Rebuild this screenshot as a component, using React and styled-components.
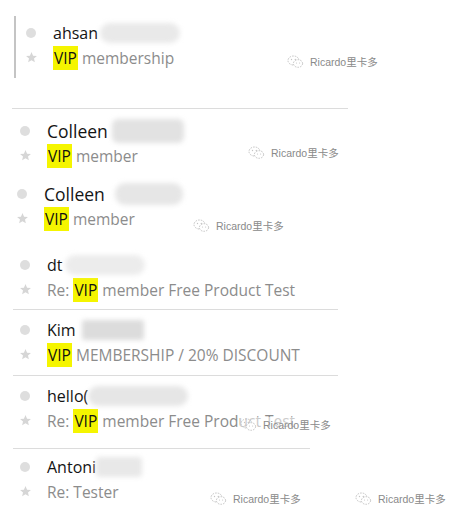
import React from "react";
import styled, { createGlobalStyle } from "styled-components";

// =================== Global ===================
const GlobalStyle = createGlobalStyle`
  html, body {
    margin: 0;
    padding: 0;
    background: #ffffff;
  }
  body {
    font-family: "Open Sans", "Noto Sans", "Liberation Sans", sans-serif;
  }
`;

// =================== Styled Components ===================
const Page = styled.div`
  position: relative;
  width: 467px;
  height: 521px;
  overflow: hidden;
  display: flex;
  flex-direction: column;
  align-items: flex-start;
`;

const Clip = styled.div`
  box-sizing: border-box;
  margin-top: ${(p) => p.$mt || 0}px;
  margin-left: ${(p) => p.$ml || 0}px;
  width: ${(p) => (p.$w ? `${p.$w}px` : "auto")};
  padding: ${(p) => p.$pt || 0}px 0 ${(p) => p.$pb || 0}px ${(p) => p.$pl || 0}px;
  border-left: ${(p) => (p.$bar ? "2px solid #c4c4c4" : "none")};
  border-top: ${(p) => (p.$lineTop ? "1px solid #dcdcdc" : "none")};
  border-bottom: ${(p) => (p.$lineBottom ? "1px solid #dcdcdc" : "none")};
  min-height: ${(p) => (p.$h ? `${p.$h}px` : "0")};
`;

const Row = styled.div`
  display: grid;
  grid-template-columns: 16px auto;
  column-gap: 14px;
  grid-auto-rows: 25px;
  align-items: center;
`;

const IconCell = styled.div`
  display: flex;
  align-items: center;
  justify-content: center;
`;

const Dot = styled.span`
  width: 10px;
  height: 10px;
  border-radius: 50%;
  background: #dedede;
`;

const Name = styled.div`
  font-size: ${(p) => p.$size || 16}px;
  color: #141414;
  white-space: nowrap;
  display: flex;
  align-items: center;
`;

const Blur = styled.span`
  display: inline-block;
  width: ${(p) => p.$w}px;
  height: ${(p) => p.$h || 20}px;
  margin-left: ${(p) => p.$ml || 0}px;
  background: ${(p) => p.$bg || "#e4e4e4"};
  border-radius: ${(p) => p.$r ?? 10}px;
  filter: blur(2.5px);
`;

const Subject = styled.div`
  font-size: 15.5px;
  color: #8c8c8c;
  white-space: nowrap;
`;

const Mark = styled.span`
  background: #f5f500;
  color: #111;
  padding: 1px 1px;
`;

const Watermark = styled.div`
  position: absolute;
  left: ${(p) => p.$x}px;
  top: ${(p) => p.$y}px;
  display: flex;
  align-items: center;
  gap: 6px;
  font-family: "Liberation Sans", "Noto Sans CJK SC", sans-serif;
  font-size: 10.5px;
  color: #8a8a8a;
  background: ${(p) => (p.$solid ? "rgba(255,255,255,0.55)" : "transparent")};
  white-space: nowrap;
`;

// =================== Icons ===================
const Star = () => (
  <svg width="13" height="13" viewBox="0 0 24 24">
    <path
      d="M12 2l2.9 6.6 7.1.6-5.4 4.7 1.6 7-6.2-3.7-6.2 3.7 1.6-7L2 9.2l7.1-.6z"
      fill="#d6d6d6"
    />
  </svg>
);

const WeChatIcon = () => (
  <svg width="17" height="14" viewBox="0 0 17 14">
    <ellipse cx="6.5" cy="5.5" rx="5.5" ry="4.5" fill="none" stroke="#c4c4c4" strokeWidth="1" strokeDasharray="1.6 1.1" />
    <ellipse cx="11" cy="8.5" rx="4.6" ry="3.8" fill="#fff" stroke="#c4c4c4" strokeWidth="1" strokeDasharray="1.6 1.1" />
    <circle cx="4.5" cy="4.5" r="0.7" fill="#c4c4c4" />
    <circle cx="8.3" cy="4.5" r="0.7" fill="#c4c4c4" />
    <circle cx="9.5" cy="8" r="0.6" fill="#c4c4c4" />
    <circle cx="12.6" cy="8" r="0.6" fill="#c4c4c4" />
  </svg>
);

// =================== Data ===================
const emails = [
  {
    name: "ahsan",
    blur: { w: 80, ml: 2, bg: "#e9e9e9" },
    subject: [null, "membership"],
    clip: { $mt: 16, $ml: 14, $pl: 7, $pt: 4, $h: 62, $bar: true },
  },
  {
    name: "Colleen",
    size: 17.5,
    blur: { w: 72, ml: 4, h: 24, bg: "#e2e2e2", r: 6 },
    subject: [null, "member"],
    clip: { $mt: 30, $ml: 12, $w: 336, $pl: 5, $pt: 9, $lineTop: true },
  },
  {
    name: "Colleen",
    size: 17.5,
    blur: { w: 68, ml: 10, h: 22, bg: "#e6e6e6" },
    subject: [null, "member"],
    clip: { $mt: 13, $ml: 14, $pl: 0, $pt: 0 },
  },
  {
    name: "dt",
    blur: { w: 80, ml: 2, bg: "#ececec" },
    subject: ["Re: ", "member Free Product Test"],
    clip: { $mt: 21, $ml: 13, $w: 325, $pl: 4, $pb: 7, $lineBottom: true },
  },
  {
    name: "Kim",
    blur: { w: 62, ml: 6, bg: "#dcdcdc", r: 2 },
    subject: [null, "MEMBERSHIP / 20% DISCOUNT"],
    clip: { $w: 325, $ml: 13, $pl: 4, $pt: 7, $pb: 8, $lineBottom: true },
  },
  {
    name: "hello(",
    blur: { w: 100, ml: 0, bg: "#e6e6e6" },
    subject: ["Re: ", "member Free Product Test"],
    clip: { $w: 297, $ml: 13, $pl: 4, $pt: 7, $pb: 15, $lineBottom: true },
  },
  {
    name: "Antoni",
    blur: { w: 46, ml: 0, bg: "#e8e8e8", r: 4 },
    subject: ["Re: Tester"],
    clip: { $ml: 13, $pl: 4, $pt: 5 },
  },
];

const watermarks = [
  { x: 287, y: 54 },
  { x: 248, y: 145 },
  { x: 193, y: 218 },
  { x: 240, y: 417, solid: true },
  { x: 210, y: 491 },
  { x: 355, y: 491 },
];

// ====================== Component ======================
const App = () => {
  return (
    <>
      <GlobalStyle />
      <Page>
        {emails.map((email, index) => (
          <Clip key={index} {...email.clip}>
            <Row>
              <IconCell>
                <Dot />
              </IconCell>
              <Name $size={email.size}>
                {email.name}
                <Blur
                  $w={email.blur.w}
                  $ml={email.blur.ml}
                  $h={email.blur.h}
                  $bg={email.blur.bg}
                  $r={email.blur.r}
                />
              </Name>
              <IconCell>
                <Star />
              </IconCell>
              <Subject>
                {email.subject.length === 1 ? (
                  email.subject[0]
                ) : (
                  <>
                    {email.subject[0]}
                    <Mark>VIP</Mark> {email.subject[1]}
                  </>
                )}
              </Subject>
            </Row>
          </Clip>
        ))}

        {watermarks.map((w, index) => (
          <Watermark key={index} $x={w.x} $y={w.y} $solid={w.solid}>
            <WeChatIcon />
            <span>Ricardo里卡多</span>
          </Watermark>
        ))}
      </Page>
    </>
  );
};

export default App;
